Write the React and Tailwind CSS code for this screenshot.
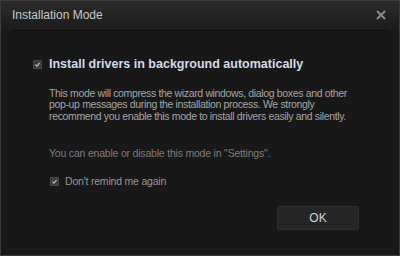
import React from 'react'

function Check() {
  return (
    <span className="w-[9px] h-[9px] inline-flex items-center justify-center bg-[#3a3a3a] border border-[#4a4a4a] rounded-[1px] shrink-0">
      <svg viewBox="0 0 10 10" className="w-full h-full">
        <path d="M2 5.2 L4.2 7.3 L8 2.8" fill="none" stroke="#c8c8c8" strokeWidth="1.6" />
      </svg>
    </span>
  )
}

export default function App() {
  return (
    <div
      className="w-[400px] h-[256px] bg-[#181818] border border-[#3c3c3c] flex flex-col overflow-hidden"
      style={{ fontFamily: '"Liberation Sans", Arial, sans-serif' }}
    >
      {/* Title bar */}
      <div className="h-[29px] shrink-0 bg-gradient-to-b from-[#2b2b2b] to-[#1c1c1c] flex items-center justify-between pl-[11px] pr-[13px]">
        <span className="text-[12px] text-[#c4c8cc] -mt-[2px]">Installation Mode</span>
        <svg viewBox="0 0 10 10" className="w-[10px] h-[10px] -mt-[2px]">
          <path d="M1 1 L9 9 M9 1 L1 9" stroke="#8a8a8a" strokeWidth="2" />
        </svg>
      </div>
      <div className="mx-[12px] h-px bg-[#0c0c0c]" />

      {/* Body */}
      <div className="flex-1 bg-[#181818] flex flex-col pl-[32px] pr-[30px]">
        <div className="flex items-center gap-[7px] mt-[24px]">
          <Check />
          <span className="text-[12.5px] font-bold text-[#d4dae6]">Install drivers in background automatically</span>
        </div>

        <p className="mt-[14px] ml-[16px] text-[10.5px] leading-[11.5px] tracking-[-0.35px] text-[#a4a4a4] whitespace-nowrap">
          This mode will compress the wizard windows, dialog boxes and other
          <br />
          pop-up messages during the installation process. We strongly
          <br />
          recommend you enable this mode to install drivers easily and silently.
        </p>

        <p className="mt-[24px] ml-[16px] text-[10.5px] tracking-[-0.2px] text-[#7c7c7c]">
          You can enable or disable this mode in "Settings".
        </p>

        <div className="flex items-center gap-[6px] mt-[12px] ml-[17px]">
          <Check />
          <span className="text-[10.5px] tracking-[-0.2px] text-[#969696]">Don't remind me again</span>
        </div>

        <div className="flex justify-end mt-[16px] mr-[10px]">
          <button className="w-[82px] h-[24px] bg-[#262626] border border-[#2e2e2e] rounded-[2px] text-[12px] text-[#d0d4d8]">
            OK
          </button>
        </div>
      </div>
    </div>
  )
}
